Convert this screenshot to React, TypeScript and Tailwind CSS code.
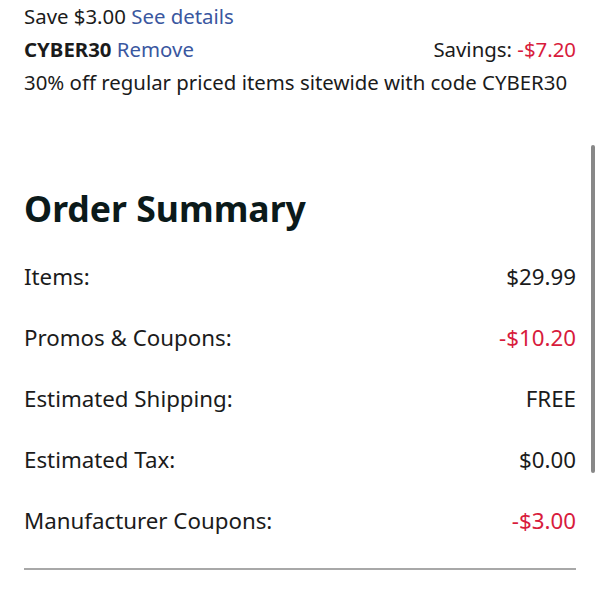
const rows = [
  { label: "Items:", value: "$29.99", red: false },
  { label: "Promos & Coupons:", value: "-$10.20", red: true },
  { label: "Estimated Shipping:", value: "FREE", red: false },
  { label: "Estimated Tax:", value: "$0.00", red: false },
  { label: "Manufacturer Coupons:", value: "-$3.00", red: true },
];

const App = () => {
  return (
    <div className="relative h-[600px] w-[600px] overflow-hidden bg-white font-['Noto_Sans',sans-serif] text-[#1b1b1b]">
      <div className="px-6">
        <div className="text-[20.4px] leading-[33px]">
          <p>
            Save $3.00 <span className="text-[#3a57a0]">See details</span>
          </p>
          <div className="flex justify-between">
            <p>
              <span className="font-bold">CYBER30</span> <span className="text-[#3a57a0]">Remove</span>
            </p>
            <p>
              Savings: <span className="text-[#d81b3c]">-$7.20</span>
            </p>
          </div>
          <p>30% off regular priced items sitewide with code CYBER30</p>
        </div>

        <h2 className="mt-[87px] text-[35.6px] font-bold leading-[44px] text-[#0b1a1a]">Order Summary</h2>

        <div className="mt-[16px]">
          {rows.map((row, index) => (
            <div key={index} className="flex h-[61px] items-center justify-between text-[22.3px]">
              <span>{row.label}</span>
              <span className={row.red ? "text-[#d81b3c]" : ""}>{row.value}</span>
            </div>
          ))}
        </div>

        <div className="mt-[17px] h-[2px] bg-[#a8a8a8]" />
      </div>

      <div className="absolute left-[591px] top-[145px] h-[328px] w-[4px] rounded-full bg-[#888]" />
    </div>
  );
};

export default App;
